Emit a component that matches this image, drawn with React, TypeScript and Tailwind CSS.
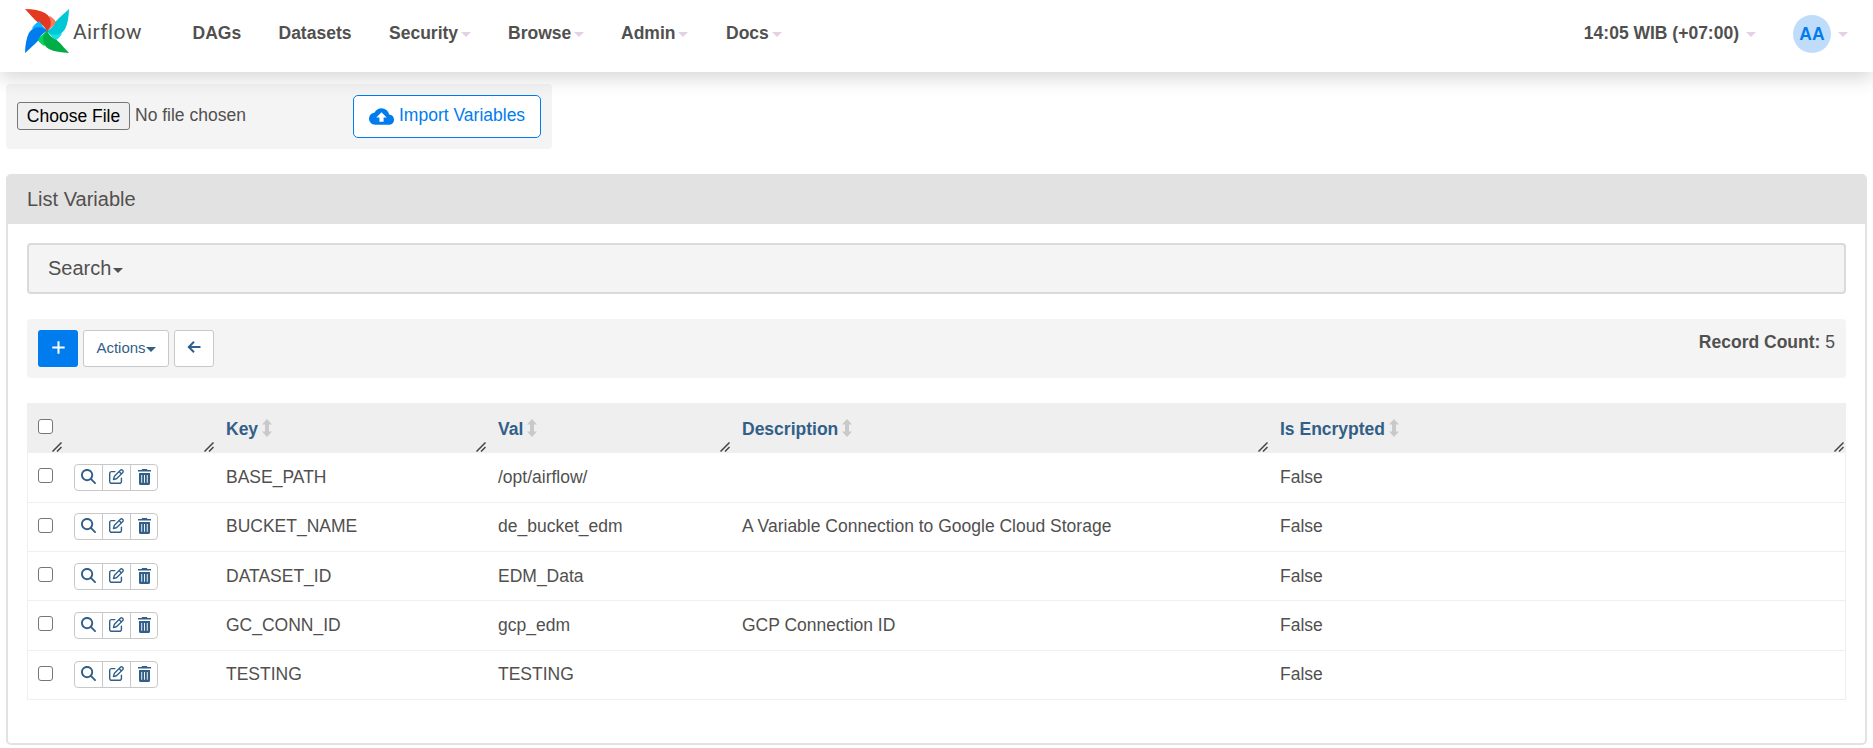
import type { ReactNode } from "react";
import { MdCloudUpload } from "react-icons/md";
import { FaMagnifyingGlass, FaRegPenToSquare } from "react-icons/fa6";

type Variable = { key: string; val: string; description: string; encrypted: string };

const variables: Variable[] = [
  { key: "BASE_PATH", val: "/opt/airflow/", description: "", encrypted: "False" },
  { key: "BUCKET_NAME", val: "de_bucket_edm", description: "A Variable Connection to Google Cloud Storage", encrypted: "False" },
  { key: "DATASET_ID", val: "EDM_Data", description: "", encrypted: "False" },
  { key: "GC_CONN_ID", val: "gcp_edm", description: "GCP Connection ID", encrypted: "False" },
  { key: "TESTING", val: "TESTING", description: "", encrypted: "False" },
];

const rowGrid = "grid grid-cols-[37px_152px_272px_244px_538px_1fr]";

function Blade({ angle, dark, light }: { angle: number; dark: string; light: string }) {
  return (
    <g transform={`rotate(${angle} 22 22)`}>
      <path d="M24.5 6.8C28 9 30.5 11.5 31.8 14.2C28 17 25 19.5 22 22Z" fill={light} />
      <path d="M0 0C8 .2 15 1.4 20 3.9C24 6.2 25.8 9.5 25.8 14C25.8 18 24 20 22 22C20 18.5 17 14.5 12.6 13.2C9.3 10.5 4.5 4.8 0 0Z" fill={dark} />
    </g>
  );
}

function Pinwheel() {
  return (
    <svg viewBox="0 0 44 44" className="h-[44px] w-[44px]">
      <Blade angle={0} dark="#e43921" light="#ff7557" />
      <Blade angle={90} dark="#00c7d4" light="#11e1ee" />
      <Blade angle={180} dark="#00ad46" light="#04d659" />
      <Blade angle={270} dark="#017cee" light="#0cb6ff" />
      <circle cx="22" cy="22" r="0.8" fill="#51504f" />
    </svg>
  );
}

function Caret({ className }: { className: string }) {
  return (
    <svg viewBox="0 0 10 5" className={`h-[5px] w-[10px] shrink-0 ${className}`}>
      <path d="M0 0H10L5 5Z" fill="currentColor" />
    </svg>
  );
}

function PlusIcon() {
  return (
    <svg viewBox="0 0 13 13" className="h-[13px] w-[13px]" stroke="currentColor" strokeWidth="2" fill="none">
      <path d="M6.5 .3V12.7M.3 6.5H12.7" />
    </svg>
  );
}

function BackIcon() {
  return (
    <svg viewBox="0 0 14 12" className="h-[12px] w-[14px]" stroke="currentColor" strokeWidth="2" fill="none">
      <path d="M13.5 6H2M7 .8L1.8 6L7 11.2" />
    </svg>
  );
}

function TrashIcon() {
  return (
    <svg viewBox="0 0 13 16" className="h-[16px] w-[13px]" fill="currentColor">
      <path d="M4.2 0H8.8L9.5 1H13V2.6H0V1H3.5Z" />
      <path fillRule="evenodd" d="M1 4H12V14.4Q12 16 10.4 16H2.6Q1 16 1 14.4ZM3.3 6V13.8H4.2V6ZM6.05 6V13.8H6.95V6ZM8.8 6V13.8H9.7V6Z" />
    </svg>
  );
}

function NavItem({ label, width, menu }: { label: string; width: string; menu?: boolean }) {
  return (
    <a className={`flex items-center ${width}`}>
      {label}
      {menu && <Caret className="mt-[2px] ml-[3px] text-[#e2d2e4]" />}
    </a>
  );
}

function Checkbox() {
  return <input type="checkbox" className="block h-[15px] w-[15px] appearance-none rounded-[3px] border border-[#767676] bg-white" />;
}

function Grip() {
  return (
    <svg viewBox="0 0 10 10" className="absolute right-[2px] bottom-px h-[10px] w-[10px]">
      <path d="M.5 9.5L9.5 .5M5 9.5L9.5 5" stroke="#444" strokeWidth="1.5" fill="none" />
    </svg>
  );
}

function HeaderCell({ label, children }: { label?: string; children?: ReactNode }) {
  return (
    <div className="relative h-[50px] px-[10px]">
      {label && (
        <div className="flex h-full items-center pt-[2px] font-bold text-[#325f88]">
          {label}
          <svg viewBox="0 0 10 18" className="mb-[3px] ml-[4px] h-[18px] w-[10px]">
            <path d="M5 0L10 5.4H7V12.6H10L5 18L0 12.6H3V5.4H0Z" fill="#c9c9c9" />
          </svg>
        </div>
      )}
      {children}
      <Grip />
    </div>
  );
}

function RowActions() {
  return (
    <div className="flex h-[27px] w-[84px] divide-x divide-[#c8c8c8] rounded-[4px] border border-[#c8c8c8] bg-white text-[15px] text-[#325f88]">
      <button className="flex w-[28px] items-center justify-center pb-[2px]"><FaMagnifyingGlass /></button>
      <button className="flex w-[28px] items-center justify-center pb-[2px]"><FaRegPenToSquare /></button>
      <button className="flex flex-1 items-center justify-center pb-px"><TrashIcon /></button>
    </div>
  );
}

export default function App() {
  return (
    <div className="h-[748px] overflow-hidden bg-white font-['Liberation_Sans',Arial,sans-serif] text-[17.5px] leading-[25px] text-[#51504f]">
      <nav className="relative flex h-[72px] items-start bg-white pl-[25px] font-bold shadow-[0_6px_18px_rgba(0,0,0,0.16)]">
        <div className="flex w-[167.5px] pt-[9px]">
          <Pinwheel />
          <span className="ml-[4px] pt-[10px] font-['Roboto',sans-serif] text-[21px] leading-[26px] font-normal tracking-[0.4px]">Airflow</span>
        </div>
        <div className="flex flex-1 pt-[21px]">
          <NavItem label="DAGs" width="w-[86px]" />
          <NavItem label="Datasets" width="w-[110.5px]" />
          <NavItem label="Security" width="w-[119px]" menu />
          <NavItem label="Browse" width="w-[113px]" menu />
          <NavItem label="Admin" width="w-[105px]" menu />
          <NavItem label="Docs" width="w-[70px]" menu />
        </div>
        <div className="flex items-center pt-[21px]">
          14:05 WIB (+07:00)
          <Caret className="mt-[2px] ml-[7px] text-[#e2d2e4]" />
        </div>
        <div className="mr-[25px] ml-[37px] flex items-center pt-[15px]">
          <span className="flex h-[38px] w-[38px] items-center justify-center rounded-full bg-[#bfddfb] text-[#017cee]">AA</span>
          <Caret className="ml-[7px] text-[#e2d2e4]" />
        </div>
      </nav>

      <main className="px-[6px] pt-[12px]">
        <form className="flex h-[65px] w-[546px] items-center rounded-[4px] bg-[#f4f4f4] pr-[11px] pl-[11px]">
          <button className="mb-px h-[28px] w-[113px] rounded-[3px] border border-[#767676] bg-[#efefef] leading-[26px] whitespace-nowrap text-black">Choose File</button>
          <span className="ml-[5px] flex-1 pb-[2px]">No file chosen</span>
          <button className="flex h-[43px] w-[188px] items-center rounded-[5px] border border-[#017cee] bg-white pb-[2px] pl-[15px] whitespace-nowrap text-[#017cee]">
            <MdCloudUpload className="mt-[2px] mr-[5px] h-[25px] w-[25px]" />
            Import Variables
          </button>
        </form>

        <section className="mt-[25px] h-[571px] rounded-[5px] border-2 border-[#e2e2e2]">
          <h4 className="flex h-[48px] items-center bg-[#e2e2e2] pb-[2px] pl-[19px] text-[20px]">List Variable</h4>
          <div className="px-[19px] pt-[19px]">
            <div className="flex h-[51px] items-center rounded-[4px] border-2 border-[#dadada] bg-[#f4f4f4] pb-px pl-[19px] text-[20px]">
              Search
              <Caret className="mt-[4px] ml-[2px]" />
            </div>

            <div className="mt-[25px] flex h-[59px] items-start justify-between rounded-[4px] bg-[#f4f4f4] px-[11px]">
              <div className="flex gap-[5px] pt-[11px] text-[15px] text-[#325f88]">
                <button className="flex h-[37px] w-[40px] items-center justify-center rounded-[3px] bg-[#017cee] pb-[2px] pl-px text-white"><PlusIcon /></button>
                <button className="flex h-[37px] w-[86px] items-center justify-center rounded-[3px] border border-[#c8c8c8] bg-white pb-[3px]">
                  Actions
                  <Caret className="mt-[4px]" />
                </button>
                <button className="flex h-[37px] w-[40px] items-center justify-center rounded-[3px] border border-[#c8c8c8] bg-white pb-[3px]"><BackIcon /></button>
              </div>
              <div className="pt-[11px]"><strong>Record Count:</strong> 5</div>
            </div>

            <div className="mt-[25px]">
              <div className={`${rowGrid} bg-[#efefef]`}>
                <HeaderCell><div className="pt-[16px] pl-px"><Checkbox /></div></HeaderCell>
                <HeaderCell />
                <HeaderCell label="Key" />
                <HeaderCell label="Val" />
                <HeaderCell label="Description" />
                <HeaderCell label="Is Encrypted" />
              </div>
              <div className="border-x border-[#efefef]">
                {variables.map((v) => (
                  <div key={v.key} className={`${rowGrid} -mx-px h-[49.25px] items-center border-b border-[#efefef] *:px-[10px] first:h-[49.75px]`}>
                    <div className="pb-[3px]"><div className="pl-px"><Checkbox /></div></div>
                    <div><RowActions /></div>
                    <div>{v.key}</div>
                    <div>{v.val}</div>
                    <div>{v.description}</div>
                    <div>{v.encrypted}</div>
                  </div>
                ))}
              </div>
            </div>
          </div>
        </section>
      </main>
    </div>
  );
}
